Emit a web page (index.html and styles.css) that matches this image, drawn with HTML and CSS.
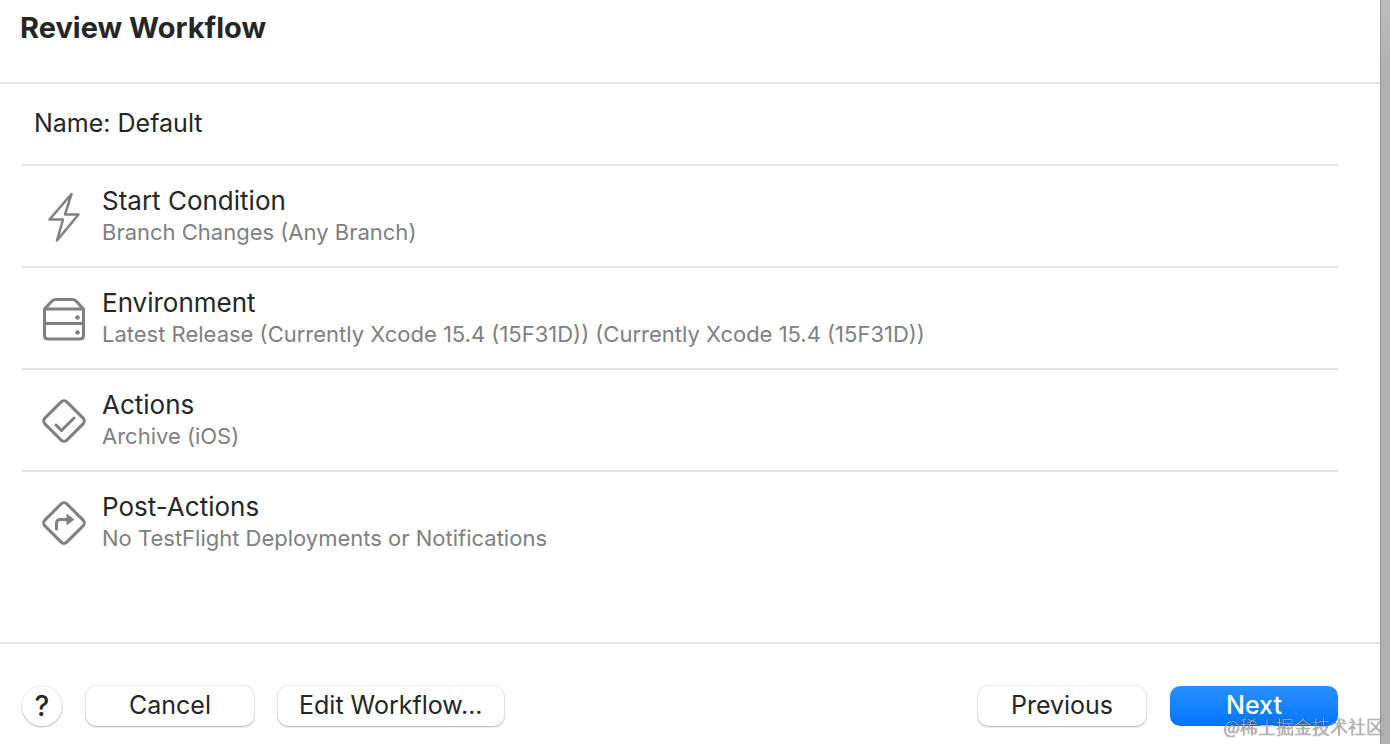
FILE: index.html
```
<!DOCTYPE html>
<html lang="en">
<head>
    <meta charset="UTF-8">
    <meta name="viewport" content="width=device-width, initial-scale=1.0">
    <title>Review Workflow</title>
    <link rel="stylesheet" href="styles.css">
</head>
<body>

    <div class="sheet">
        <header class="header">
            <h1>Review Workflow</h1>
        </header>

        <main class="content">
            <p class="name">Name: Default</p>
            <ul class="steps">
                <li class="step">
                    <svg class="icon" viewBox="0 0 52 52" aria-hidden="true">
                        <path class="bolt" d="M33.5 4L11.500 29.500H25L19 50.500L40.500 24.500H27Z"/>
                    </svg>
                    <div>
                        <h2>Start Condition</h2>
                        <p>Branch Changes (Any Branch)</p>
                    </div>
                </li>
                <li class="step">
                    <svg class="icon" viewBox="0 0 52 52" aria-hidden="true">
                        <path d="M6.500 17H45.500V43.500Q45.500 47 42 47H10Q6.500 47 6.500 43.500ZM6.500 17L14 9Q15.500 7.500 18 7.500H34Q36.500 7.500 38 9L45.500 17M6.500 31.500H45.500"/>
                        <circle class="dot" cx="39.500" cy="25.500" r="2.300"/>
                        <circle class="dot" cx="39.500" cy="40.500" r="2.300"/>
                    </svg>
                    <div>
                        <h2>Environment</h2>
                        <p>Latest Release (Currently Xcode 15.4 (15F31D)) (Currently Xcode 15.4 (15F31D))</p>
                    </div>
                </li>
                <li class="step">
                    <svg class="icon" viewBox="0 0 52 52" aria-hidden="true">
                        <rect x="10.500" y="11.500" width="31" height="31" rx="4" transform="rotate(45 26 27)"/>
                        <path d="M18 31L23.500 36.500L36 24"/>
                    </svg>
                    <div>
                        <h2>Actions</h2>
                        <p>Archive (iOS)</p>
                    </div>
                </li>
                <li class="step">
                    <svg class="icon" viewBox="0 0 52 52" aria-hidden="true">
                        <rect x="10.500" y="11.500" width="31" height="31" rx="4" transform="rotate(45 26 27)"/>
                        <path d="M18.500 33V27.500Q18.500 23.500 22.500 23.500H30"/>
                        <path class="dot" d="M28.500 17.500L36.500 23.500L28.500 29.500Z"/>
                    </svg>
                    <div>
                        <h2>Post-Actions</h2>
                        <p>No TestFlight Deployments or Notifications</p>
                    </div>
                </li>
            </ul>
        </main>

        <footer class="footer">
            <button class="help" type="button" aria-label="Help">?</button>
            <button type="button">Cancel</button>
            <button type="button">Edit Workflow...</button>
            <span class="spacer"></span>
            <button type="button">Previous</button>
            <button class="primary" type="button">Next</button>
        </footer>
    </div>

    <div class="watermark">@稀土掘金技术社区</div>

</body>
</html>
```

FILE: styles.css
```
* {
    box-sizing: border-box;
}

body {
    margin: 0;
    padding-right: 10px;
    background: linear-gradient(#bcbcbc, #b0b0b0 80px);
    font-family: Inter, "Liberation Sans", sans-serif;
    font-size: 25px;
    color: #262626;
}

h1, h2, p, ul {
    margin: 0;
    padding: 0;
}

.sheet {
    display: flex;
    flex-direction: column;
    min-height: 100vh;
    background: #fff;
    box-shadow: 1px 0 0 #999;
}

.header {
    padding: 8px 20px 34px;
    border-bottom: 2px solid #e5e5e5;
}

h1 {
    font-size: 29px;
    line-height: 40px;
    font-weight: 650;
}

.content {
    flex: 1;
    padding: 0 42px 0 22px;
}

.name {
    padding: 19px 12px 21px;
    line-height: 40px;
    border-bottom: 2px solid #e5e5e5;
}

.steps {
    list-style: none;
}

.step {
    display: flex;
    align-items: center;
    gap: 12px;
    padding: 18px 16px;
    border-bottom: 2px solid #e5e5e5;
}

.step:last-child {
    border-bottom: none;
}

.step h2 {
    font-size: 26px;
    line-height: 34px;
    font-weight: 400;
}

.step p {
    padding-bottom: 2px;
    font-size: 22px;
    line-height: 28px;
    color: #808080;
}

.icon {
    flex: none;
    width: 52px;
    height: 52px;
    fill: none;
    stroke: #808080;
    stroke-width: 3;
    stroke-linecap: round;
    stroke-linejoin: round;
}

.icon .bolt {
    stroke-width: 2.5;
}

.icon .dot {
    fill: #808080;
    stroke: none;
}

.footer {
    display: flex;
    align-items: center;
    gap: 24px;
    padding: 42px 42px 18px 22px;
    border-top: 2px solid #e5e5e5;
}

.spacer {
    flex: 1;
}

button {
    min-width: 168px;
    height: 40px;
    padding: 0 21px 2px;
    border: none;
    border-radius: 10px;
    background: #fff;
    box-shadow: 0 0 0 1px rgba(0, 0, 0, 0.06), 0 1px 2px rgba(0, 0, 0, 0.25);
    font-family: inherit;
    font-size: 25px;
    line-height: 38px;
    color: #262626;
}

.help {
    min-width: 40px;
    width: 40px;
    padding: 0;
    border-radius: 50%;
    font-size: 28px;
    font-weight: 500;
}

.primary {
    background: linear-gradient(#2a8fff, #0276ff);
    box-shadow: none;
    font-weight: 500;
    color: #fff;
}

/* lies over the corner of the window */
.watermark {
    position: fixed;
    right: 6px;
    bottom: 5px;
    font-family: "Noto Sans CJK SC", sans-serif;
    font-size: 18px;
    font-weight: 300;
    line-height: 26px;
    color: rgba(235, 235, 235, 0.8);
    text-shadow: 0 0 1px rgba(0, 0, 0, 0.8), 0 0 1px rgba(0, 0, 0, 0.5);
    pointer-events: none;
}
```
